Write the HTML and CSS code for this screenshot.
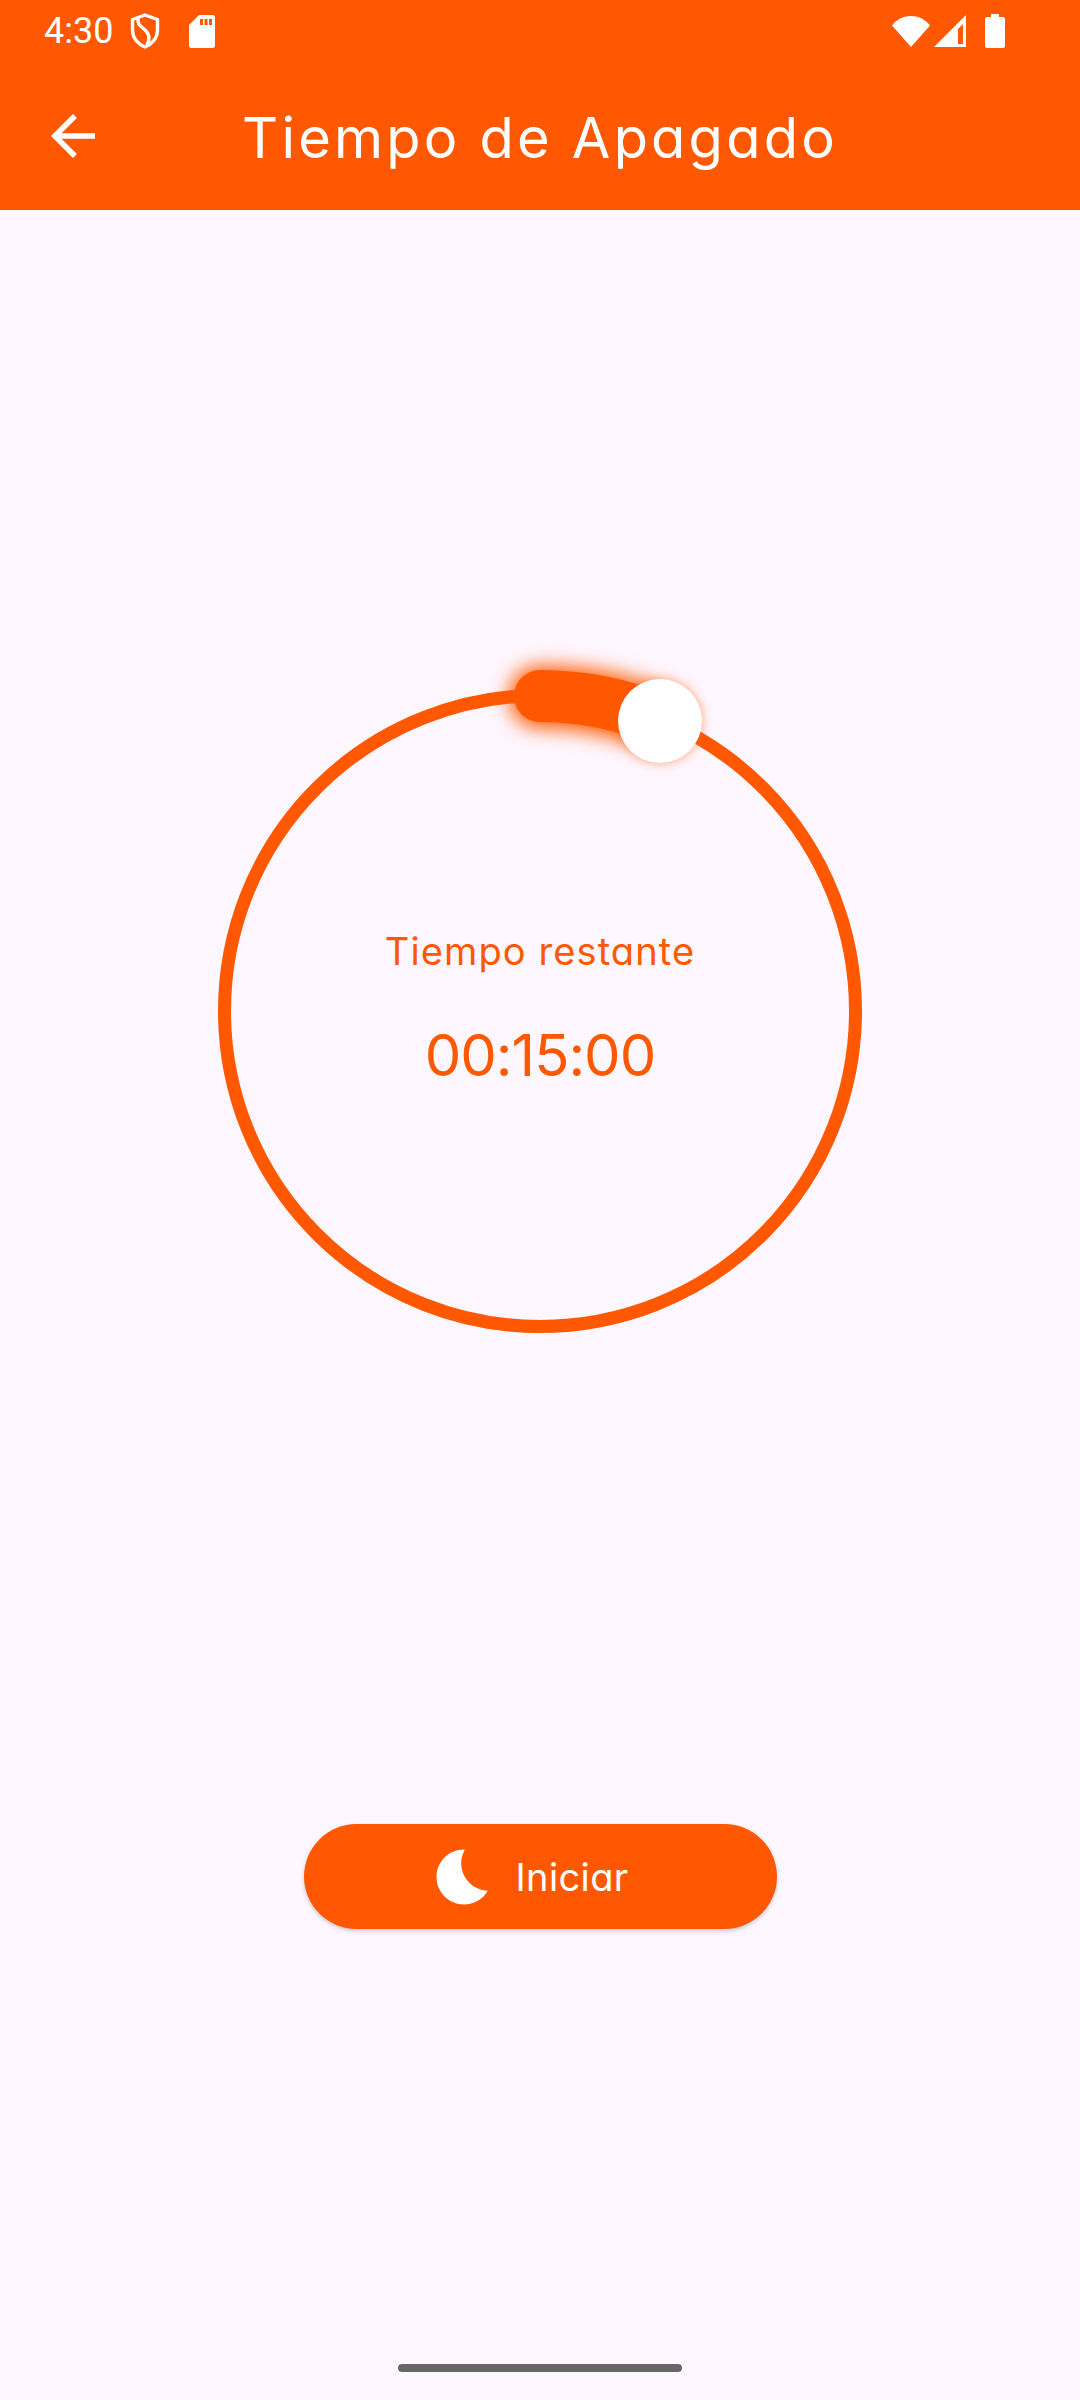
FILE: index.html
```html
<!DOCTYPE html>
<html lang="es">
<head>
    <meta charset="UTF-8">
    <meta name="viewport" content="width=device-width, initial-scale=1.0">
    <title>Tiempo de Apagado</title>
    <link rel="stylesheet" href="styles.css">
</head>
<body>
    <div class="header">
        <div class="status-bar">
            <div class="status-left">
                <span class="clock">4:30</span>
                <svg class="icon-shield" viewBox="0 0 30 36">
                    <path d="M15 2 L27.5 6.5 V17 C27.5 25 22 31 15 34 C8 31 2.5 25 2.5 17 V6.5 Z" fill="none" stroke="#fff" stroke-width="3.4" stroke-linejoin="round"/>
                    <path d="M8 5 C7 12 12 14 16 18 C19 21 20 26 17 32" fill="none" stroke="#fff" stroke-width="3.4"/>
                </svg>
                <svg class="icon-sd" viewBox="0 0 26 33">
                    <path fill-rule="evenodd" d="M10 0 H23.5 A2.5 2.5 0 0 1 26 2.5 V30.5 A2.5 2.5 0 0 1 23.5 33 H2.5 A2.5 2.5 0 0 1 0 30.5 V10 Z M11 4 V10 H14 V4 Z M15.5 4 V10 H18.5 V4 Z M20 4 V10 H23 V4 Z" fill="#fff"/>
                </svg>
            </div>
            <div class="status-right">
                <svg class="icon-wifi" viewBox="0 0 38 32">
                    <path d="M0 10.500 C5 4 12 1 19 1 C26 1 33 4 38 10.500 L19 32 Z" fill="#fff"/>
                </svg>
                <svg class="icon-signal" viewBox="0 0 32 32">
                    <path fill-rule="evenodd" d="M32 0 V32 H0 Z M29 9 L24 14 V29 H29 Z" fill="#fff"/>
                </svg>
                <svg class="icon-battery" viewBox="0 0 20 34">
                    <path d="M6 0 H14 V3 H18 A2 2 0 0 1 20 5 V32 A2 2 0 0 1 18 34 H2 A2 2 0 0 1 0 32 V5 A2 2 0 0 1 2 3 H6 Z" fill="#fff"/>
                </svg>
            </div>
        </div>
        <div class="app-bar">
            <svg class="back" viewBox="0 0 24 24">
                <path d="M20 11H7.83l5.59-5.59L12 4l-8 8 8 8 1.41-1.41L7.83 13H20v-2z" fill="#fff"/>
            </svg>
            <div class="title">Tiempo de Apagado</div>
        </div>
    </div>

    <div class="main">
        <div class="dial">
            <svg class="dial-ring" viewBox="0 0 660 660">
                <defs>
                    <filter id="glow" filterUnits="userSpaceOnUse" x="200" y="-100" width="400" height="260">
                        <feGaussianBlur stdDeviation="10"/>
                    </filter>
                    <filter id="thumbGlow" filterUnits="userSpaceOnUse" x="360" y="-50" width="180" height="180">
                        <feGaussianBlur stdDeviation="5"/>
                    </filter>
                </defs>
                <circle cx="330" cy="330" r="315.500" fill="none" stroke="#ff5800" stroke-width="13"/>
                <path d="M330 16 A315 315 0 0 1 450.500 40" fill="none" stroke="#ff5800" stroke-width="62" stroke-linecap="round" filter="url(#glow)"/>
                <path d="M330 15 A315 315 0 0 1 450.500 39" fill="none" stroke="#ff5800" stroke-width="52" stroke-linecap="round"/>
                <circle cx="450" cy="40" r="43" fill="#ff5800" opacity="0.3" filter="url(#thumbGlow)"/>
                <circle cx="450" cy="40" r="42" fill="#fff"/>
            </svg>
            <div class="dial-text">
                <div class="remaining-label">Tiempo restante</div>
                <div class="remaining-time">00:15:00</div>
            </div>
        </div>

        <button class="start-btn" type="button">
            <svg class="moon" viewBox="0 0 24 24">
                <path d="M12.340 2.020C6.590 1.820 2 6.420 2 12c0 5.520 4.480 10 10 10 3.710 0 6.930-2.020 8.660-5.020-7.510-.25-12.090-8.430-8.320-14.960z" fill="#fff"/>
            </svg>
            <span>Iniciar</span>
        </button>
    </div>

    <div class="home-bar"></div>
</body>
</html>
```

FILE: styles.css
```css
html, body {
    height: 100%;
    margin: 0;
}
body {
    display: flex;
    flex-direction: column;
    background-color: #fef7ff;
    font-family: Inter, "Open Sans", sans-serif;
    font-feature-settings: "cv11";
    color: #ff5800;
    box-sizing: border-box;
    padding-bottom: 28px;
}
.header {
    background-color: #ff5800;
    color: #fff;
    height: 210px;
    flex-shrink: 0;
}
.status-bar {
    display: flex;
    justify-content: space-between;
    align-items: center;
    height: 62px;
    padding: 0 75px 0 44px;
}
.status-left, .status-right {
    display: flex;
    align-items: center;
}
.clock {
    font-family: Roboto, sans-serif;
    font-size: 36px;
    width: 86px;
}
.icon-shield {
    width: 30px;
    height: 36px;
    margin-right: 29px;
}
.icon-sd {
    width: 26px;
    height: 33px;
}
.icon-wifi {
    width: 38px;
    height: 32px;
    margin-right: 4px;
}
.icon-signal {
    width: 32px;
    height: 32px;
    margin-right: 19px;
}
.icon-battery {
    width: 20px;
    height: 34px;
}
.app-bar {
    display: grid;
    grid-template-columns: 1fr auto 1fr;
    align-items: center;
    height: 148px;
}
.back {
    width: 66px;
    height: 66px;
    margin-left: 40px;
}
.title {
    font-size: 56px;
    line-height: 66px;
    letter-spacing: 3.2px;
    padding-top: 3px;
}
.main {
    display: flex;
    flex-direction: column;
    align-items: center;
    padding-top: 471px;
}
.dial {
    position: relative;
    width: 660px;
    height: 660px;
    display: flex;
    align-items: center;
    justify-content: center;
}
.dial-ring {
    position: absolute;
    top: 0;
    left: 0;
    width: 660px;
    height: 660px;
    overflow: visible;
}
.dial-text {
    position: relative;
    display: flex;
    flex-direction: column;
    align-items: center;
    gap: 47px;
    margin-bottom: 3px;
}
.remaining-label {
    font-size: 38px;
    line-height: 44px;
    letter-spacing: 1.1px;
}
.remaining-time {
    font-size: 58px;
    line-height: 70px;
    letter-spacing: -1px;
}
.start-btn {
    display: flex;
    align-items: center;
    justify-content: center;
    gap: 18px;
    width: 473px;
    height: 105px;
    margin-top: 483px;
    padding: 0 20px 0 0;
    background-color: #ff5800;
    border: none;
    border-radius: 53px;
    box-shadow: 0 2px 4px rgba(0, 0, 0, 0.2);
    color: #fff;
    font-family: inherit;
    font-feature-settings: inherit;
    font-size: 38px;
    letter-spacing: 0.4px;
}
.moon {
    width: 66px;
    height: 66px;
}
.home-bar {
    width: 284px;
    height: 8px;
    margin: auto auto 0;
    background-color: #666;
    border-radius: 4px;
}
```
